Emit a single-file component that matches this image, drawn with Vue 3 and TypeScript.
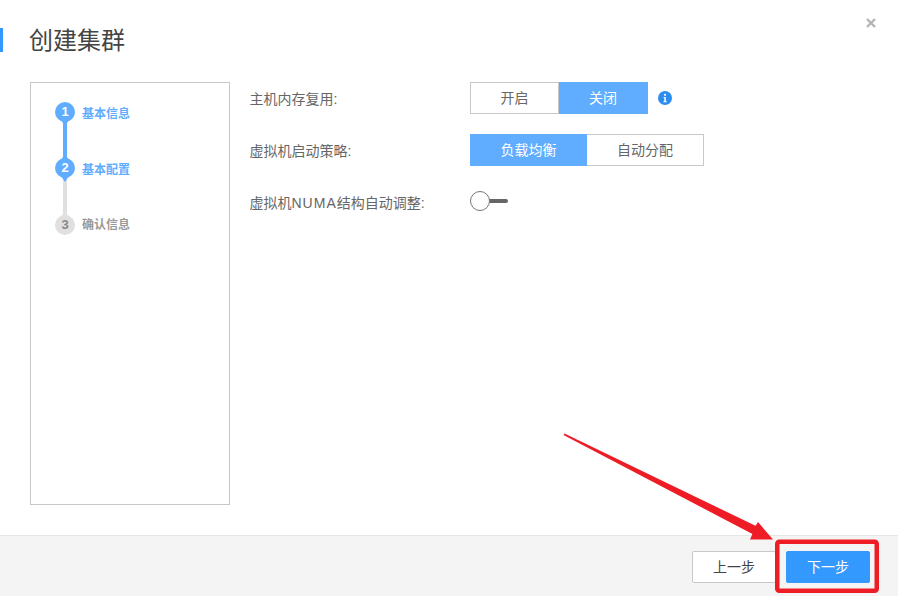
<script setup lang="ts">
interface Step { n: number; label: string; state: string }
const steps: Step[] = [
  { n: 1, label: '基本信息', state: 'done' },
  { n: 2, label: '基本配置', state: 'current' },
  { n: 3, label: '确认信息', state: 'todo' },
]
</script>

<template>
  <div class="dialog">
    <button class="close" aria-label="关闭">
      <svg width="10" height="10" viewBox="0 0 10 10"><path d="M1 1L9 9M9 1L1 9" stroke="#b4b4b4" stroke-width="2.4" /></svg>
    </button>
    <header class="head"><h1>创建集群</h1></header>
    <main class="body">
      <aside class="steps">
        <div v-for="s in steps" :key="s.n" class="step" :class="s.state">
          <span class="dot">{{ s.n }}</span>
          <span class="step-label">{{ s.label }}</span>
        </div>
      </aside>
      <section class="form">
        <div class="row">
          <label>主机内存复用:</label>
          <div class="seg">
            <span class="opt w89">开启</span>
            <span class="opt w89 on">关闭</span>
          </div>
          <svg class="info" width="14" height="14" viewBox="0 0 14 14">
            <circle cx="7" cy="7" r="7" fill="#2d8cf0" />
            <circle cx="7" cy="3.8" r="1.1" fill="#fff" />
            <path d="M5.6 6h2.2v4.2h.9v1H5.4v-1h.9V7h-.7z" fill="#fff" />
          </svg>
        </div>
        <div class="row">
          <label>虚拟机启动策略:</label>
          <div class="seg">
            <span class="opt w117 on">负载均衡</span>
            <span class="opt w117">自动分配</span>
          </div>
        </div>
        <div class="row">
          <label>虚拟机<span class="latin">NUMA</span>结构自动调整:</label>
          <div class="toggle"><span class="bar"></span><span class="knob"></span></div>
        </div>
      </section>
    </main>
    <footer class="foot">
      <button class="btn">上一步</button>
      <button class="btn primary">下一步</button>
    </footer>
    <svg class="mark" width="898" height="596" viewBox="0 0 898 596">
      <path d="M564.5 433.5L755.5 525.8L758 522L773 539.5L750 539.5L752.4 534L563.5 435Z" fill="#ee1c25" />
      <rect x="777.25" y="541.75" width="99.5" height="49" rx="2" fill="none" stroke="#ee1c25" stroke-width="4.5" />
    </svg>
  </div>
</template>

<style>
html, body { margin: 0; background: #fff; }
</style>

<style scoped>
.dialog {
  position: relative;
  width: 898px;
  height: 596px;
  display: flex;
  flex-direction: column;
  overflow: hidden;
  background: #fff;
  font-family: "Liberation Sans", "Noto Sans CJK SC", sans-serif;
  color: #666;
}
.close {
  position: absolute;
  top: 18px;
  right: 22px;
  width: 10px;
  height: 10px;
  padding: 0;
  border: 0;
  background: none;
  display: flex;
}
.head { padding-top: 28px; height: 54px; box-sizing: border-box; flex: none; }
.head h1 {
  margin: 0;
  height: 24px;
  line-height: 26px;
  border-left: 3px solid #3399ff;
  padding-left: 26px;
  font-size: 24px;
  font-weight: 400;
  color: #444;
}
.body {
  flex: 1;
  min-height: 0;
  display: flex;
  padding: 28px 0 30px 30px;
}
.steps {
  width: 200px;
  height: 423px;
  box-sizing: border-box;
  border: 1px solid #c8c8c8;
  padding: 19px 0 0 24px;
}
.step {
  position: relative;
  height: 56px;
  display: flex;
  align-items: flex-start;
  gap: 7px;
}
.dot {
  position: relative;
  z-index: 1;
  width: 20px;
  height: 20px;
  border-radius: 50%;
  background: #60adff;
  color: #fff;
  font: 700 13px/20px "Liberation Sans", sans-serif;
  text-align: center;
}
.dot::after {
  content: "";
  position: absolute;
  left: 4px;
  top: 15px;
  border-left: 6px solid transparent;
  border-right: 6px solid transparent;
  border-top: 9px solid #60adff;
}
.step.current .dot::before,
.step.todo .dot::before {
  content: "";
  position: absolute;
  left: 4px;
  top: -4px;
  border-left: 6px solid transparent;
  border-right: 6px solid transparent;
  border-bottom: 9px solid #60adff;
}
.step-label {
  font-size: 12px;
  font-weight: 700;
  line-height: 20px;
  margin-top: 2px;
  color: #60adff;
}
.step.done::after,
.step.current::after {
  content: "";
  position: absolute;
  left: 8px;
  top: 16px;
  width: 4px;
  height: 44px;
  background: #60adff;
}
.step.current::after { background: #e0e0e0; }
.step.todo .dot { background: #e0e0e0; color: #888; margin-top: 1px; }
.step.todo .dot::after { display: none; }
.step.todo .dot::before { border-bottom-color: #e0e0e0; }
.step.todo .step-label { color: #999; margin-top: 1px; }
.form { margin-left: 20px; }
.row {
  height: 32px;
  margin-bottom: 20px;
  display: flex;
  align-items: center;
}
.row label {
  width: 220px;
  flex: none;
  align-self: flex-start;
  font-size: 14px;
  line-height: 34px;
  margin-left: -0.5px;
  margin-right: 0.5px;
  color: #666;
}
.latin { letter-spacing: 1px; }
.seg { display: flex; }
.opt {
  box-sizing: border-box;
  height: 32px;
  border: 1px solid #c8c8c8;
  font-size: 14px;
  line-height: 30px;
  text-align: center;
  color: #666;
}
.opt + .opt { border-left: 0; }
.opt.on { background: #60adff; border-color: #60adff; color: #fff; }
.w89 { width: 89px; }
.w117 { width: 117px; }
.info { margin-left: 10px; }
.toggle {
  position: relative;
  width: 38px;
  height: 20px;
  margin-top: -3px;
}
.bar {
  position: absolute;
  left: 16px;
  top: 8px;
  width: 22px;
  height: 4px;
  border-radius: 2px;
  background: #666;
}
.knob {
  position: absolute;
  left: 0;
  top: 0;
  width: 20px;
  height: 20px;
  box-sizing: border-box;
  border: 1px solid #777;
  border-radius: 50%;
  background: #fff;
}
.foot {
  flex: none;
  height: 61px;
  box-sizing: border-box;
  border-top: 1px solid #e6e6e6;
  background: #f4f4f4;
  display: flex;
  justify-content: flex-end;
  gap: 10px;
  padding: 15px 28px 0 0;
}
.btn {
  width: 84px;
  height: 32px;
  box-sizing: border-box;
  border: 1px solid #c8c8c8;
  border-radius: 2px;
  background: #fff;
  color: #444;
  font: 14px/30px "Liberation Sans", "Noto Sans CJK SC", sans-serif;
  padding: 0;
}
.btn.primary { background: #3399ff; border-color: #3399ff; color: #fff; }
.mark { position: absolute; left: 0; top: 0; pointer-events: none; }
</style>
